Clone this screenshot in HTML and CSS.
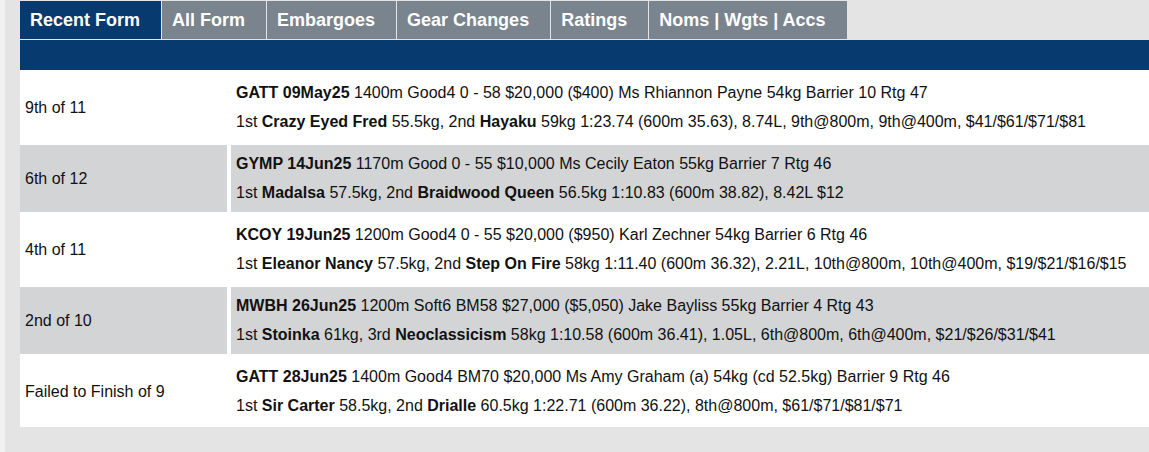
FILE: index.html
```html
<!DOCTYPE html>
<html lang="en">
<head>
<meta charset="utf-8">
<title>Recent Form</title>
<link rel="stylesheet" href="styles.css">
</head>
<body>
<div class="page">
  <nav class="tabs">
    <a class="tab active">Recent Form</a>
    <a class="tab">All Form</a>
    <a class="tab">Embargoes</a>
    <a class="tab">Gear Changes</a>
    <a class="tab">Ratings</a>
    <a class="tab">Noms | Wgts | Accs</a>
  </nav>
  <div class="bar"></div>
  <div class="form-list">
    <div class="race">
      <div class="pos">9th of 11</div>
      <div class="details">
        <div class="line"><b>GATT 09May25</b> 1400m Good4 0 - 58 $20,000 ($400) Ms Rhiannon Payne 54kg Barrier 10 Rtg 47</div>
        <div class="line">1st <b>Crazy Eyed Fred</b> 55.5kg, 2nd <b>Hayaku</b> 59kg 1:23.74 (600m 35.63), 8.74L, 9th@800m, 9th@400m, $41/$61/$71/$81</div>
      </div>
    </div>
    <div class="race alt">
      <div class="pos">6th of 12</div>
      <div class="details">
        <div class="line"><b>GYMP 14Jun25</b> 1170m Good 0 - 55 $10,000 Ms Cecily Eaton 55kg Barrier 7 Rtg 46</div>
        <div class="line">1st <b>Madalsa</b> 57.5kg, 2nd <b>Braidwood Queen</b> 56.5kg 1:10.83 (600m 38.82), 8.42L $12</div>
      </div>
    </div>
    <div class="race">
      <div class="pos">4th of 11</div>
      <div class="details">
        <div class="line"><b>KCOY 19Jun25</b> 1200m Good4 0 - 55 $20,000 ($950) Karl Zechner 54kg Barrier 6 Rtg 46</div>
        <div class="line">1st <b>Eleanor Nancy</b> 57.5kg, 2nd <b>Step On Fire</b> 58kg 1:11.40 (600m 36.32), 2.21L, 10th@800m, 10th@400m, $19/$21/$16/$15</div>
      </div>
    </div>
    <div class="race alt">
      <div class="pos">2nd of 10</div>
      <div class="details">
        <div class="line"><b>MWBH 26Jun25</b> 1200m Soft6 BM58 $27,000 ($5,050) Jake Bayliss 55kg Barrier 4 Rtg 43</div>
        <div class="line">1st <b>Stoinka</b> 61kg, 3rd <b>Neoclassicism</b> 58kg 1:10.58 (600m 36.41), 1.05L, 6th@800m, 6th@400m, $21/$26/$31/$41</div>
      </div>
    </div>
    <div class="race">
      <div class="pos">Failed to Finish of 9</div>
      <div class="details">
        <div class="line"><b>GATT 28Jun25</b> 1400m Good4 BM70 $20,000 Ms Amy Graham (a) 54kg (cd 52.5kg) Barrier 9 Rtg 46</div>
        <div class="line">1st <b>Sir Carter</b> 58.5kg, 2nd <b>Drialle</b> 60.5kg 1:22.71 (600m 36.22), 8th@800m, $61/$71/$81/$71</div>
      </div>
    </div>
  </div>
</div>
</body>
</html>
```
FILE: styles.css
```css
html, body {
  margin: 0;
  padding: 0;
}
body {
  background: #f1f1f1;
  overflow: hidden;
  font-family: "Liberation Sans", Arial, sans-serif;
  color: #111;
}
.page {
  margin-left: 5px;
  width: 1180px;
  background: #e4e4e4;
  padding: 1px 0 30px 15px;
}
.tabs {
  display: flex;
  gap: 1px;
  margin-bottom: 1px;
}
.tab {
  display: flex;
  align-items: center;
  height: 38px;
  padding: 0 21px 0 10px;
  background: #7a848e;
  color: #fff;
  font-weight: bold;
  font-size: 18px;
  white-space: nowrap;
}
.tab.active {
  background: #073a6e;
}
.bar {
  height: 30px;
  background: #073a6e;
}
.form-list {
  background: #fff;
  display: flex;
  flex-direction: column;
  gap: 4px;
  padding: 4px 0 2px;
}
.race {
  display: flex;
  gap: 4px;
  font-size: 16px;
}
.pos {
  width: 197px;
  flex: none;
  padding: 0 5px;
  display: flex;
  align-items: center;
}
.details {
  flex: 1;
  padding: 10px 5px;
}
.line {
  line-height: 18px;
  white-space: nowrap;
}
.line + .line {
  margin-top: 11px;
}
.race.alt .pos,
.race.alt .details {
  background: #d3d4d6;
}
```
